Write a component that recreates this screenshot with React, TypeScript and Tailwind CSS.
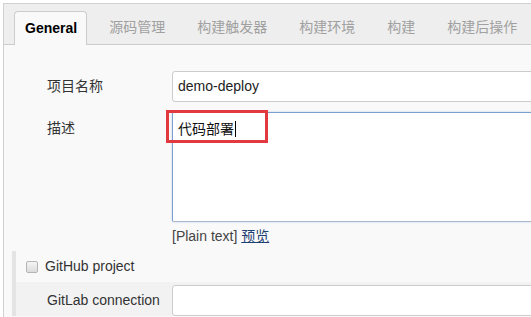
const TABS = ['源码管理', '构建触发器', '构建环境', '构建', '构建后操作']

const FONT = "font-['Liberation_Sans','Noto_Sans_CJK_SC',sans-serif]"

export default function App() {
  return (
    <div className={`w-[531px] h-[317px] overflow-hidden bg-white pl-[3px] pt-[3px] ${FONT}`}>
      <div className="h-[400px] w-[600px] border-l border-t border-[#d2d2d2] bg-[#f9f9f9]">
        {/* tab bar */}
        <div className="flex h-[41px] items-end border-b border-[#cccccc] bg-[#eeeeee] pl-[10px]">
          <div className="-mb-px flex h-[34px] items-center rounded-t-[4px] border border-b-0 border-[#cccccc] bg-[#f9f9f9] pl-[10px] pr-[9px] text-[14px] font-bold text-black">
            General
          </div>
          <div className="ml-[6px] flex">
            {TABS.map((t) => (
              <div key={t} className="flex h-[33px] items-center px-4 text-[14px] text-[#a0a0a0]">
                {t}
              </div>
            ))}
          </div>
        </div>

        {/* form */}
        <div className="pt-[26px] text-[14px] text-[#333]">
          <div className="grid grid-cols-[168px_1fr] items-center">
            <div className="pl-[43px]">项目名称</div>
            <div className="flex h-[31px] w-[380px] items-center rounded-[3px] border border-[#cccccc] bg-white pl-[5px] text-[#222]">
              demo-deploy
            </div>
          </div>

          <div className="mt-[10px] grid grid-cols-[168px_1fr] items-start">
            <div className="mt-[6px] pl-[43px] leading-5">描述</div>
            <div>
              <div className="relative h-[110px] w-[380px] rounded-[2px] border border-[#7a9fd0] border-b-[#a9b8cc] bg-white shadow-[0_0_2px_rgba(120,160,210,0.5)]">
                <div className="flex items-center pl-[5px] pt-[6px] leading-5 text-[#111]">
                  代码部署
                  <span className="ml-px inline-block h-[16px] w-px bg-black" />
                </div>
                <div className="absolute left-[-7px] top-[-3px] h-[33px] w-[102px] border-[3px] border-[#e2383f]" />
              </div>
              <div className="mt-[5px] leading-[18px] text-[#444]">
                [Plain text]{' '}
                <a className="text-[#1d3f72] underline">预览</a>
              </div>
            </div>
          </div>

          {/* GitHub / GitLab section */}
          <div className="ml-[8px] mt-[6px] border-l-4 border-[#e4e4e4]">
            <div className="flex h-[31px] items-center pl-[10px]">
              <span className="inline-block h-[12px] w-[12px] rounded-[2px] border border-[#b5b5b5] bg-gradient-to-b from-[#f4f4f4] to-[#dcdcdc]" />
              <span className="ml-[7px] text-[#333]">GitHub project</span>
            </div>
            <div className="grid grid-cols-[156px_1fr] items-start bg-[#f2f2f2] pt-[3px]">
              <div className="pl-[31px] pt-[5px] leading-5">GitLab connection</div>
              <div className="h-[31px] w-[380px] rounded-[3px] border border-[#cccccc] bg-white" />
            </div>
          </div>
        </div>
      </div>
    </div>
  )
}
